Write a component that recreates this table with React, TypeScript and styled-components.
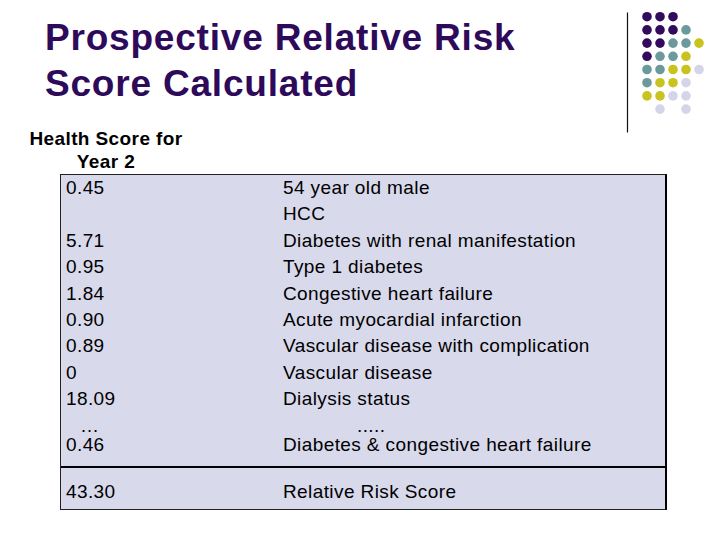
import styled, { createGlobalStyle } from "styled-components";

const GlobalStyle = createGlobalStyle`
  html, body {
    margin: 0;
    padding: 0;
    background: #ffffff;
  }
  * {
    box-sizing: border-box;
  }
`;

type Factor = {
  score: string;
  label: string;
  compact?: boolean;
  scoreIndent?: number;
  labelIndent?: number;
};

const factors: Factor[] = [
  { score: "0.45", label: "54 year old male" },
  { score: "", label: "HCC" },
  { score: "5.71", label: "Diabetes with renal manifestation" },
  { score: "0.95", label: "Type 1 diabetes" },
  { score: "1.84", label: "Congestive heart failure" },
  { score: "0.90", label: "Acute myocardial infarction" },
  { score: "0.89", label: "Vascular disease with complication" },
  { score: "0", label: "Vascular disease" },
  { score: "18.09", label: "Dialysis status" },
  { score: "…", label: ".....", compact: true, scoreIndent: 14, labelIndent: 74 },
  { score: "0.46", label: "Diabetes & congestive heart failure" },
];

// slide template ornament, one letter per dot
const dotRows = ["PPP", "PPPT", "PPTTY", "PTTY", "TTYYL", "TYYL", "YYLL", ".L.L"];
const dotColors: Record<string, string> = {
  P: "#330b5e",
  T: "#6c9a9c",
  Y: "#c9c31d",
  L: "#d5d5ea",
};

const Ornament = () => (
  <OrnamentSvg width="90" height="130" viewBox="0 0 90 130">
    <line x1="7.5" y1="4.5" x2="7.5" y2="124.5" stroke="#111" strokeWidth="1.2" />
    {dotRows.map((row, i) =>
      row.split("").map((c, j) =>
        c === "." ? null : (
          <circle key={`${i}-${j}`} cx={27 + 13 * j} cy={8.7 + 13.2 * i} r="4.8" fill={dotColors[c]} />
        )
      )
    )}
  </OrnamentSvg>
);

const App = () => {
  return (
    <>
      <GlobalStyle />
      <Slide>
        <Ornament />
        <Title>
          Prospective Relative Risk
          <br />
          Score Calculated
        </Title>
        <ColumnHeading>
          Health Score for
          <br />
          Year 2
        </ColumnHeading>
        <ScoreTable>
          <TableSection>
            {factors.map((f, i) => (
              <Row key={i} compact={f.compact}>
                <Cell indent={f.scoreIndent}>{f.score}</Cell>
                <Cell indent={f.labelIndent}>{f.label}</Cell>
              </Row>
            ))}
          </TableSection>
          <SummarySection>
            <Row>
              <Cell>43.30</Cell>
              <Cell>Relative Risk Score</Cell>
            </Row>
          </SummarySection>
        </ScoreTable>
      </Slide>
    </>
  );
};

export default App;

const Slide = styled.div`
  position: relative;
  width: 720px;
  height: 540px;
  overflow: hidden;
  background: #ffffff;
  font-family: "Liberation Sans", Arial, sans-serif;
  color: #000;
  padding-top: 15px;
`;

const OrnamentSvg = styled.svg`
  position: absolute;
  left: 620px;
  top: 8px;
`;

const Title = styled.h1`
  margin: 0 0 0 45px;
  font-size: 37px;
  line-height: 46px;
  letter-spacing: 0.8px;
  font-weight: bold;
  color: #2e0a5a;
`;

const ColumnHeading = styled.div`
  margin: 20px 0 0 28px;
  width: 156px;
  text-align: center;
  font-size: 19px;
  line-height: 23px;
  letter-spacing: 0.4px;
  font-weight: bold;
`;

const ScoreTable = styled.div`
  margin: 1px 0 0 60px;
  width: 607px;
  background: #d9d9ec;
  border: 1px solid #222;
  border-right: 2px solid #000;
  font-size: 19px;
  letter-spacing: 0.4px;
`;

const TableSection = styled.div`
  padding: 0 0 8px 5px;
`;

const SummarySection = styled.div`
  border-top: 2px solid #000;
  padding: 11px 0 3px 5px;
`;

const Row = styled.div<{ compact?: boolean }>`
  display: grid;
  grid-template-columns: 217px 1fr;
  line-height: 26.4px;
  height: ${(p) => (p.compact ? "19.4px" : "26.4px")};
  white-space: nowrap;
`;

const Cell = styled.div<{ indent?: number }>`
  padding-left: ${(p) => p.indent ?? 0}px;
`;
